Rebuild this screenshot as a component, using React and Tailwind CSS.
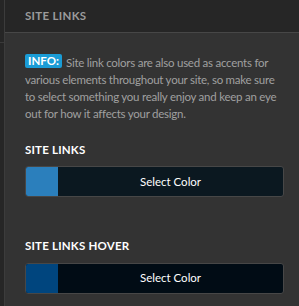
export default function App() {
  const font = { fontFamily: 'Lato, "Open Sans", sans-serif' };
  return (
    <div className="flex w-[299px] h-[306px] bg-[#262626] overflow-hidden" style={font}>
      <div className="w-[4px] shrink-0 flex flex-col">
        <div className="h-[43px] shrink-0 border-b border-[#3a3a3a]" />
        <div className="flex-1" />
      </div>
      <div className="flex-1 border-l border-[#3c3c3c] flex flex-col bg-[#333333]">
        <div className="h-[33px] shrink-0 bg-[#262626] border-b border-[#474747] flex items-center pl-[20px]">
          <span className="text-[11.5px] font-bold tracking-[0.3px] text-[#9b9b9b] uppercase">Site Links</span>
        </div>
        <div className="shrink-0 pl-[20px] pr-[15px] pt-[21px]">
          <p className="text-[11.5px] leading-[17px] tracking-[-0.25px] text-[#a0a0a0]">
            <span className="inline-block align-top bg-[#1a9cd6] text-white font-bold tracking-[0px] rounded-[2px] px-[3px] h-[14px] leading-[14px] mr-[4px]">INFO:</span>
            Site link colors are also used as accents for various elements throughout your site, so make sure to select something you really enjoy and keep an eye out for how it affects your design.
          </p>
          <div className="mt-[19px] text-[11.5px] font-bold text-white tracking-[0.2px]">SITE LINKS</div>
          <button className="mt-[8px] w-full h-[31px] flex rounded-[3px] border border-[#474747] bg-[#0b1820] overflow-hidden">
            <div className="w-[32px] h-full bg-[#2b7fbc]" />
            <div className="flex-1 flex items-center justify-center text-[11.5px] text-white">Select Color</div>
          </button>
          <div className="mt-[40px] text-[11.5px] font-bold text-white tracking-[0.2px]">SITE LINKS HOVER</div>
          <button className="mt-[8px] w-full h-[31px] flex rounded-[3px] border border-[#474747] bg-[#010c15] overflow-hidden">
            <div className="w-[32px] h-full bg-[#00457e]" />
            <div className="flex-1 flex items-center justify-center text-[11.5px] text-white">Select Color</div>
          </button>
        </div>
      </div>
    </div>
  );
}
